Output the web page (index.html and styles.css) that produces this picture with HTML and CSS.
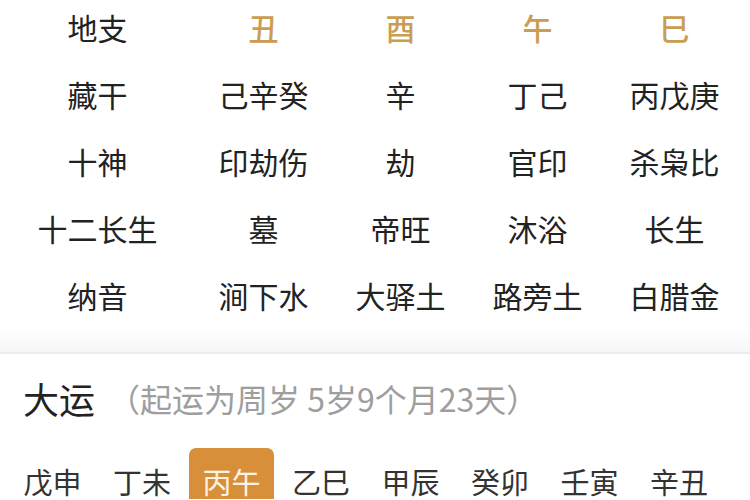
FILE: index.html
```html
<!DOCTYPE html>
<html lang="zh-CN">
<head>
<meta charset="utf-8">
<link rel="stylesheet" href="styles.css">
</head>
<body>
<div class="page">
  <div class="table">
    <div class="label">地支</div><div class="gold">丑</div><div class="gold">酉</div><div class="gold">午</div><div class="gold">巳</div>
    <div class="label">藏干</div><div>己辛癸</div><div>辛</div><div>丁己</div><div>丙戊庚</div>
    <div class="label">十神</div><div>印劫伤</div><div>劫</div><div>官印</div><div>杀枭比</div>
    <div class="label">十二长生</div><div>墓</div><div>帝旺</div><div>沐浴</div><div>长生</div>
    <div class="label">纳音</div><div>涧下水</div><div>大驿土</div><div>路旁土</div><div>白腊金</div>
  </div>
  <div class="divider"></div>
  <div class="dayun">
    <span class="title">大运</span><span class="sub">（起运为周岁 5岁9个月23天）</span>
  </div>
  <div class="yun-row">
    <div class="yun">戊申</div>
    <div class="yun">丁未</div>
    <div class="yun active">丙午</div>
    <div class="yun">乙巳</div>
    <div class="yun">甲辰</div>
    <div class="yun">癸卯</div>
    <div class="yun">壬寅</div>
    <div class="yun">辛丑</div>
  </div>
</div>
</body>
</html>
```
FILE: styles.css
```css
html, body {
  margin: 0;
  padding: 0;
  background: #fff;
}
body {
  font-family: "Noto Sans CJK SC", "Noto Sans", sans-serif;
  color: #222;
  width: 750px;
  height: 500px;
  overflow: hidden;
}
.page {
  display: flex;
  flex-direction: column;
}
.table {
  display: grid;
  grid-template-columns: 195px repeat(4, 137px);
  grid-auto-rows: 67px;
  margin-top: -7px;
  font-size: 30px;
}
.table > div {
  display: flex;
  align-items: center;
  justify-content: center;
  white-space: nowrap;
}
.table .gold {
  color: #c99d52;
  font-weight: 500;
}
.divider {
  height: 25px;
  margin-top: -1px;
  background: linear-gradient(#fff, #f7f7f7);
  border-bottom: 2px solid #ececec;
}
.dayun {
  display: flex;
  align-items: center;
  height: 88px;
  padding-left: 23px;
}
.title {
  font-size: 36px;
  color: #222;
}
.sub {
  font-size: 32px;
  color: #9e9e9e;
  margin-left: 13px;
}
.yun-row {
  display: flex;
  gap: 4.5px;
  padding-left: 10px;
  margin-top: 6px;
}
.yun {
  width: 85px;
  height: 51px;
  padding-top: 15px;
  box-sizing: border-box;
  font-size: 29px;
  line-height: 36px;
  text-align: center;
  color: #333;
  border-radius: 7px 7px 0 0;
}
.yun.active {
  background: #d88f3a;
  color: #fdf3e2;
}
```
